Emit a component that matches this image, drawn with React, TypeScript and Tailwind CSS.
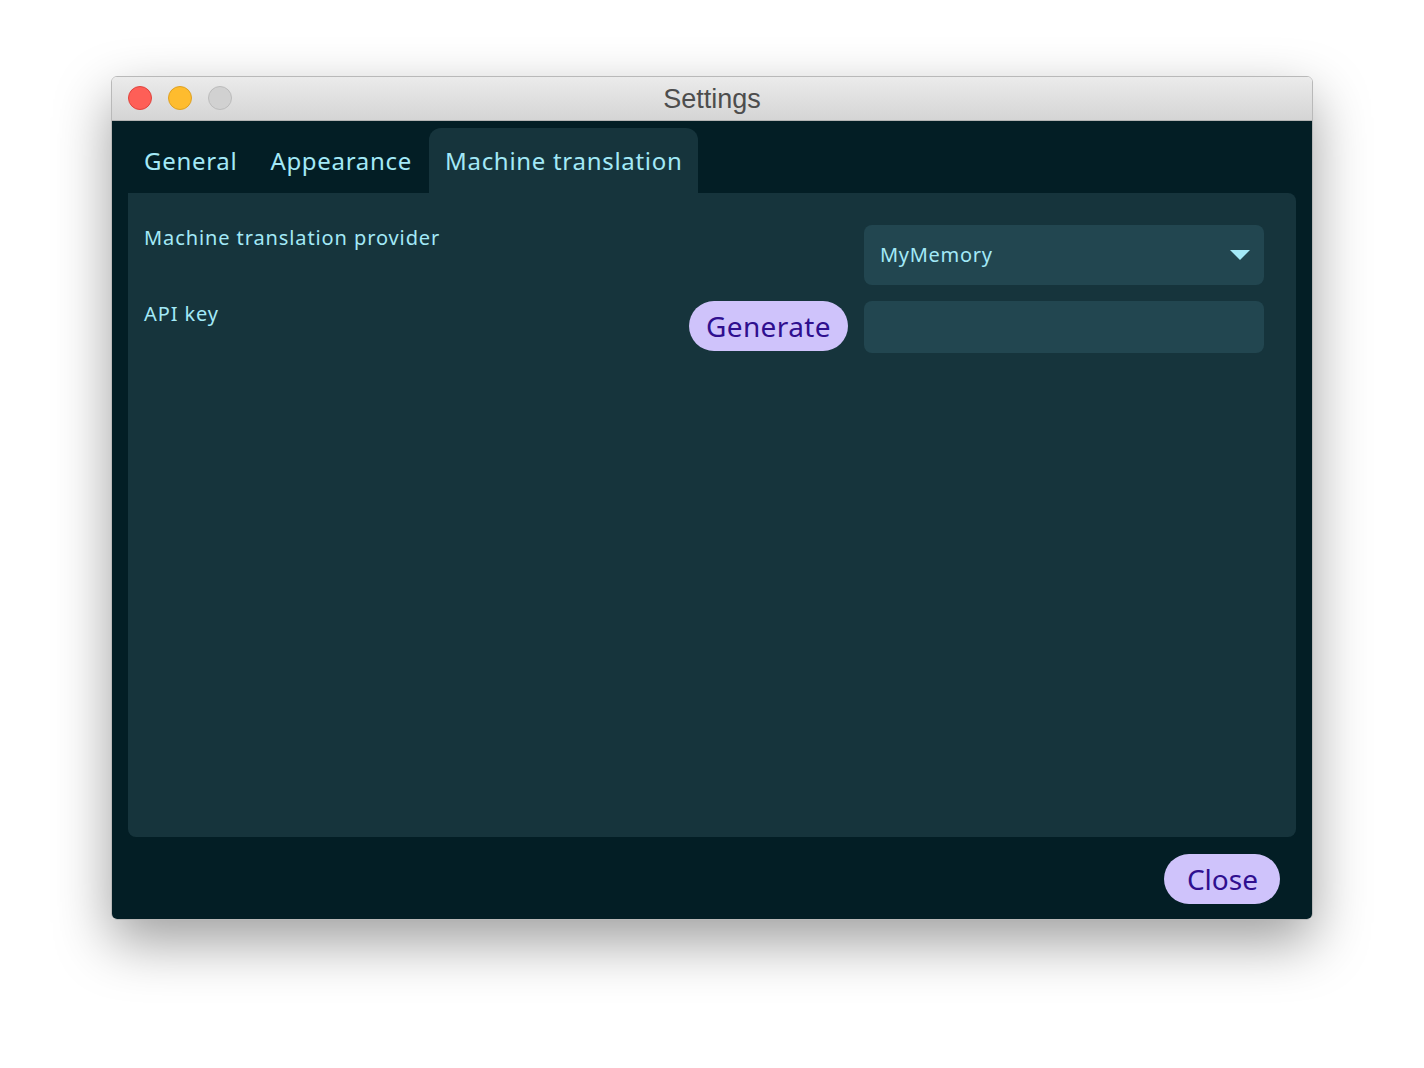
import React, { useState } from 'react'

const tabs = ['General', 'Appearance', 'Machine translation']

export default function App() {
  const [active, setActive] = useState(2)

  return (
    <div className="min-h-[1068px] w-[1424px] bg-white pt-[76px] pl-[111px]">
      <div className="w-[1202px] h-[844px] rounded-[6px] overflow-hidden flex flex-col border border-[#b9b9b9] shadow-[0_22px_55px_rgba(0,0,0,0.38)]">
        {/* Title bar */}
        <div className="relative h-[44px] shrink-0 flex items-center justify-center bg-gradient-to-b from-[#ebebeb] to-[#d5d5d5] border-b border-[#b4b4b4]">
          <div className="absolute left-[16px] top-[9px] flex gap-[16px]">
            <span className="w-[24px] h-[24px] rounded-full bg-[#fe5f57] border border-[#e0443e]" />
            <span className="w-[24px] h-[24px] rounded-full bg-[#febc2e] border border-[#dea123]" />
            <span className="w-[24px] h-[24px] rounded-full bg-[#d1d1d1] border border-[#bcbcbc]" />
          </div>
          <span className="text-[27px] text-[#4d4d4d] font-['Liberation_Sans',sans-serif] mt-[2px]">Settings</span>
        </div>

        {/* Body */}
        <div className="flex-1 flex flex-col bg-[#031e25] px-[16px] font-['Noto_Sans',sans-serif] text-[#a3e9f7]">
          <div className="flex pt-[7px] gap-[1px]">
            {tabs.map((t, i) => (
              <button
                key={t}
                onClick={() => setActive(i)}
                className={
                  'h-[65px] px-[16px] text-[24px] tracking-[0.7px] rounded-t-[12px] ' +
                  (i === active ? 'bg-[#16343c]' : 'bg-transparent')
                }
              >
                {t}
              </button>
            ))}
          </div>

          <div className="h-[644px] bg-[#16343c] rounded-b-[8px] rounded-tr-[8px] pl-[16px] pr-[32px] pt-[32px] flex flex-col gap-[16px]">
            <div className="flex items-start">
              <span className="flex-1 text-[20px] tracking-[0.9px] -mt-[2px]">Machine translation provider</span>
              <div className="w-[400px] h-[60px] rounded-[8px] bg-[#224650] flex items-center justify-between pl-[16px] pr-[14px]">
                <span className="text-[20px] tracking-[0.7px]">MyMemory</span>
                <svg width="20" height="10" viewBox="0 0 20 10">
                  <path d="M0 0 L20 0 L10 10 Z" fill="#a3e9f7" />
                </svg>
              </div>
            </div>
            <div className="flex items-start">
              <span className="flex-1 text-[20px] tracking-[0.9px] -mt-[2px]">API key</span>
              <button className="h-[50px] px-[17px] mr-[16px] rounded-full bg-[#cfc3fb] text-[#2f0f8f] text-[28px] tracking-[0.4px]">
                Generate
              </button>
              <div className="w-[400px] h-[52px] rounded-[8px] bg-[#224650]" />
            </div>
          </div>

          <div className="flex justify-end pt-[17px] pr-[16px]">
            <button className="h-[50px] pl-[23px] pr-[22px] rounded-full bg-[#cfc3fb] text-[#2f0f8f] text-[28px]">
              Close
            </button>
          </div>
        </div>
      </div>
    </div>
  )
}
